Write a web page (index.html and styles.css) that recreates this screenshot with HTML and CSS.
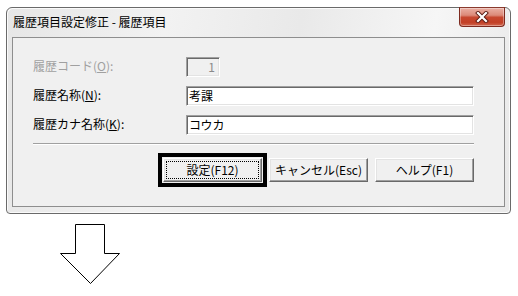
FILE: index.html
```html
<!DOCTYPE html>
<html lang="ja">
<head>
<meta charset="utf-8">
<title>履歴項目設定修正</title>
<link rel="stylesheet" href="styles.css">
</head>
<body>
<div class="window">
  <div class="titlebar">
    <span class="title">履歴項目設定修正 - 履歴項目</span>
    <div class="close">
      <svg width="14" height="12" viewBox="0 0 14 12">
        <path d="M3 2 L11 10 M11 2 L3 10" stroke="#5a1a12" stroke-width="4" stroke-linecap="square"/>
        <path d="M3 2 L11 10 M11 2 L3 10" stroke="#fff" stroke-width="2.2" stroke-linecap="square"/>
      </svg>
    </div>
  </div>
  <div class="client">
    <div class="form">
      <div class="lbl disabled">履歴コード(<u>O</u>):</div>
      <div class="field code disabled">1</div>
      <div class="lbl">履歴名称(<u>N</u>):</div>
      <div class="field">考課</div>
      <div class="lbl">履歴カナ名称(<u>K</u>):</div>
      <div class="field">コウカ</div>
    </div>
    <div class="sep"></div>
    <div class="buttons">
      <div class="btn default"><span class="cap focus">設定(F12)</span></div>
      <div class="btn"><span class="cap">キャンセル(Esc)</span></div>
      <div class="btn"><span class="cap">ヘルプ(F1)</span></div>
    </div>
  </div>
</div>
<svg class="arrow" width="62" height="62" viewBox="0 0 62 62">
  <polygon points="15.5,0.5 44.5,0.5 44.5,29.5 59.5,29.5 30.5,59.5 0.5,29.5 15.5,29.5" fill="#fff" stroke="#000" stroke-width="1"/>
</svg>
</body>
</html>
```

FILE: styles.css
```css
* { box-sizing: border-box; }
html, body { margin: 0; padding: 0; background: #fff; }
body {
  font-family: "Noto Sans CJK JP", "Noto Sans", sans-serif;
  font-size: 12px;
  color: #000;
}
.window {
  margin: 7px 0 0 6px;
  width: 505px;
  height: 207px;
  border: 1px solid #6a6a6a;
  border-radius: 6px 6px 4px 4px;
  padding: 0 5px 6px 5px;
  background: linear-gradient(100deg, #e6e6e6 0%, #f2f2f2 30%, #e9e9e9 55%, #f6f6f6 80%, #e8e8e8 100%);
  box-shadow: inset 1px 1px 0 #fafafa, inset -1px -1px 0 #fafafa;
}
.titlebar {
  height: 29px;
  display: flex;
  align-items: flex-start;
  justify-content: space-between;
}
.title {
  padding: 5px 0 0 1px;
  line-height: 17px;
  font-size: 12px;
}
.close {
  margin-top: -1px;
  width: 46px;
  height: 20px;
  border: 1px solid #7d2a1f;
  border-top-color: #8a3a2e;
  border-radius: 0 0 4px 4px;
  background: linear-gradient(#eab0a4 0%, #dc8a79 40%, #c7472f 52%, #c24026 80%, #d1674f 100%);
  box-shadow: inset 0 0 0 1px rgba(255,255,255,0.35);
  display: flex;
  align-items: center;
  justify-content: center;
}
.close svg { display: block; }
.client {
  height: 170px;
  border: 1px solid #8e8e8e;
  background: #f0f0f0;
  padding: 19px 30px 0 20px;
}
.form {
  display: grid;
  grid-template-columns: 153px 1fr;
  row-gap: 9px;
}
.lbl {
  height: 20px;
  line-height: 16px;
  padding-top: 1px;
  white-space: nowrap;
}
.lbl u { text-decoration-thickness: 1px; text-underline-offset: 1px; }
.lbl.disabled { color: #a0a0a0; }
.field {
  height: 20px;
  background: #fff;
  border: 1px solid;
  border-color: #a0a0a0 #fff #fff #a0a0a0;
  box-shadow: inset 1px 1px 0 #696969, inset -1px -1px 0 #e3e3e3;
  padding: 0 2px 0 2px;
  line-height: 17px;
  white-space: nowrap;
}
.field.code {
  width: 34px;
  text-align: right;
  padding-right: 4px;
}
.field.disabled { background: #f0f0f0; color: #8a8a8a; }
.sep {
  margin-top: 8px;
  height: 2px;
  border-top: 1px solid #a0a0a0;
  border-bottom: 1px solid #fff;
}
.buttons {
  margin-top: 13px;
  display: flex;
  justify-content: flex-end;
  gap: 7px;
}
.btn {
  width: 99px;
  height: 24px;
  background: #f0f0f0;
  border: 1px solid;
  border-color: #fff #696969 #696969 #fff;
  box-shadow: inset -1px -1px 0 #a0a0a0, inset 1px 1px 0 #e3e3e3;
  padding: 2px;
}
.btn.default {
  outline: 4px solid #000;
  outline-offset: 1px;
}
.cap {
  display: block;
  height: 18px;
  border: 1px solid transparent;
  text-align: center;
  line-height: 15px;
  white-space: nowrap;
}
.cap.focus { border: 1px dotted #000; }
.arrow {
  display: block;
  margin: 10px 0 0 60px;
}
```
